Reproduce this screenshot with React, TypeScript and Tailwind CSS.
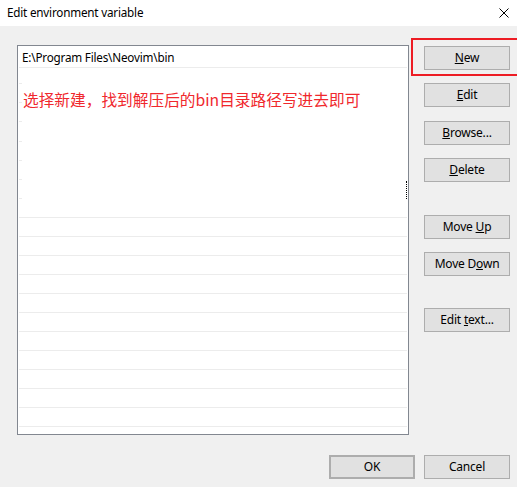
import React from "react";

const font = { fontFamily: '"Noto Sans", "Open Sans", sans-serif' };

// heights of the list rows; each row draws its bottom line
const rows: { h: string; full: boolean }[] = [
  { h: "h-[22px]", full: true },
  { h: "h-[16px]", full: false },
  { h: "h-[19px]", full: false },
  { h: "h-[19px]", full: false },
  { h: "h-[20px]", full: false },
  { h: "h-[19px]", full: false },
  { h: "h-[19px]", full: false },
  { h: "h-[19px]", full: false },
  { h: "h-[19px]", full: true },
  { h: "h-[19px]", full: true },
  { h: "h-[19px]", full: true },
  { h: "h-[19px]", full: true },
  { h: "h-[19px]", full: true },
  { h: "h-[19px]", full: true },
  { h: "h-[19px]", full: true },
  { h: "h-[19px]", full: true },
  { h: "h-[19px]", full: true },
  { h: "h-[19px]", full: true },
  { h: "h-[19px]", full: true },
  { h: "h-[19px]", full: true },
];

function Btn({ children, className = "" }: { children: React.ReactNode; className?: string }) {
  return (
    <div
      className={`w-[86px] h-[24px] flex items-center justify-center bg-[#e1e1e1] border border-[#adadad] text-[12px] tracking-[-0.2px] text-black ${className}`}
    >
      <span>{children}</span>
    </div>
  );
}

export default function App() {
  return (
    <div className="relative w-[517px] h-[487px] bg-[#f0f0f0] overflow-hidden text-[12px] text-black" style={font}>
      {/* title bar */}
      <div className="h-[26px] bg-white flex items-center justify-between pl-[7px] pr-[8px]">
        <span className="text-[11.7px] tracking-[-0.2px] leading-none">Edit environment variable</span>
        <svg width="10" height="10" viewBox="0 0 10 10">
          <path d="M0.5 0.5 L9.5 9.5 M9.5 0.5 L0.5 9.5" stroke="#000" strokeWidth="1" />
        </svg>
      </div>

      <div className="flex pl-[17px] pt-[19px]">
        {/* list box */}
        <div className="relative w-[392px] h-[390px] bg-white border border-[#828790] overflow-hidden">
          {rows.map((r, i) => (
            <div key={i} className={`${r.h} relative flex items-center`}>
              {i === 0 && (
                <span className="pl-[4px] pt-[1px] text-[11.7px] tracking-[-0.2px]">E:\Program Files\Neovim\bin</span>
              )}
              <div
                className={`absolute bottom-0 left-[1px] h-px bg-[#ececec] ${r.full ? "right-[1px]" : "w-[3px]"}`}
              />
            </div>
          ))}
          {/* dotted resize marks */}
          <div className="absolute left-[388px] top-[135px] h-[18px] border-l border-dotted border-black" />
        </div>

        {/* side buttons */}
        <div className="flex flex-col ml-[15px] pt-px">
          <Btn>
            <u>N</u>ew
          </Btn>
          <Btn className="mt-[13px]">
            <u>E</u>dit
          </Btn>
          <Btn className="mt-[14px]">
            <u>B</u>rowse...
          </Btn>
          <Btn className="mt-[13px]">
            <u>D</u>elete
          </Btn>
          <Btn className="mt-[33px]">
            Move <u>U</u>p
          </Btn>
          <Btn className="mt-[13px]">
            Move D<u>o</u>wn
          </Btn>
          <Btn className="mt-[32px]">
            Edit <u>t</u>ext...
          </Btn>
        </div>
      </div>

      {/* bottom buttons */}
      <div className="flex justify-end gap-[9px] pr-[7px] mt-[20px]">
        <Btn className="border-2 border-[#0078d7]">OK</Btn>
        <Btn>Cancel</Btn>
      </div>

      {/* annotation overlays */}
      <div className="absolute left-[411px] top-[38px] w-[120px] h-[38px] border-2 border-[#ed1c24]" />
      <div
        className="absolute left-[23px] top-[89px] text-[15.7px] leading-[22px] text-[#f0282d] whitespace-nowrap"
        style={{ fontFamily: '"Noto Sans CJK SC", "Noto Sans", sans-serif' }}
      >
        选择新建，找到解压后的bin目录路径写进去即可
      </div>
    </div>
  );
}
